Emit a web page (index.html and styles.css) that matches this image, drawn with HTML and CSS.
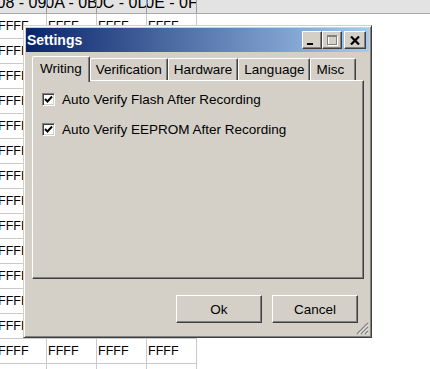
FILE: index.html
```html
<!DOCTYPE html>
<html lang="en">
<head>
  <meta charset="UTF-8" />
  <title>Settings</title>
  <link rel="stylesheet" href="styles.css">
</head>
<body>

  <div class="sheet">
    <div class="sheet-head">
      <div class="hcell"><span>08 - 09</span></div>
      <div class="hcell"><span>0A - 0B</span></div>
      <div class="hcell"><span>0C - 0D</span></div>
      <div class="hcell"><span>0E - 0F</span></div>
    </div>
    <div class="sheet-row"><div class="cell">FFFF</div><div class="cell">FFFF</div><div class="cell">FFFF</div><div class="cell">FFFF</div></div>
    <div class="sheet-row"><div class="cell">FFFF</div><div class="cell">FFFF</div><div class="cell">FFFF</div><div class="cell">FFFF</div></div>
    <div class="sheet-row"><div class="cell">FFFF</div><div class="cell">FFFF</div><div class="cell">FFFF</div><div class="cell">FFFF</div></div>
    <div class="sheet-row"><div class="cell">FFFF</div><div class="cell">FFFF</div><div class="cell">FFFF</div><div class="cell">FFFF</div></div>
    <div class="sheet-row"><div class="cell">FFFF</div><div class="cell">FFFF</div><div class="cell">FFFF</div><div class="cell">FFFF</div></div>
    <div class="sheet-row"><div class="cell">FFFF</div><div class="cell">FFFF</div><div class="cell">FFFF</div><div class="cell">FFFF</div></div>
    <div class="sheet-row"><div class="cell">FFFF</div><div class="cell">FFFF</div><div class="cell">FFFF</div><div class="cell">FFFF</div></div>
    <div class="sheet-row"><div class="cell">FFFF</div><div class="cell">FFFF</div><div class="cell">FFFF</div><div class="cell">FFFF</div></div>
    <div class="sheet-row"><div class="cell">FFFF</div><div class="cell">FFFF</div><div class="cell">FFFF</div><div class="cell">FFFF</div></div>
    <div class="sheet-row"><div class="cell">FFFF</div><div class="cell">FFFF</div><div class="cell">FFFF</div><div class="cell">FFFF</div></div>
    <div class="sheet-row"><div class="cell">FFFF</div><div class="cell">FFFF</div><div class="cell">FFFF</div><div class="cell">FFFF</div></div>
    <div class="sheet-row"><div class="cell">FFFF</div><div class="cell">FFFF</div><div class="cell">FFFF</div><div class="cell">FFFF</div></div>
    <div class="sheet-row"><div class="cell">FFFF</div><div class="cell">FFFF</div><div class="cell">FFFF</div><div class="cell">FFFF</div></div>
    <div class="sheet-row"><div class="cell">FFFF</div><div class="cell">FFFF</div><div class="cell">FFFF</div><div class="cell">FFFF</div></div>
    <div class="sheet-row"><div class="cell"></div><div class="cell"></div><div class="cell"></div><div class="cell"></div></div>
  </div>

  <div class="window">
    <div class="titlebar">
      <span class="title">Settings</span>
      <div class="title-buttons">
        <div class="tb tb-min"><span class="min-bar"></span></div>
        <div class="tb tb-max">
          <svg width="11" height="11" viewBox="0 0 11 11">
            <rect x="1.5" y="1.5" width="9" height="9" fill="none" stroke="#fff"/>
            <rect x="0.5" y="0.5" width="9" height="9" fill="none" stroke="#808080"/>
            <rect x="0" y="1" width="10" height="1" fill="#808080"/>
          </svg>
        </div>
        <div class="tb tb-close">
          <svg width="10" height="9" viewBox="0 0 10 9">
            <path d="M1 0.5 L9 8.5 M9 0.5 L1 8.5" stroke="#000" stroke-width="2.2" fill="none"/>
          </svg>
        </div>
      </div>
    </div>

    <div class="window-body">
      <div class="tabs">
        <div class="tab active">Writing</div>
        <div class="tab">Verification</div>
        <div class="tab">Hardware</div>
        <div class="tab">Language</div>
        <div class="tab tab-misc">Misc</div>
      </div>

      <div class="panel">
        <label class="check-row">
          <span class="checkbox">
            <svg width="9" height="9" viewBox="0 0 9 9"><path d="M1 4 L3.5 6.5 L8 1.5" stroke="#000" stroke-width="2" fill="none"/></svg>
          </span>
          Auto Verify Flash After Recording
        </label>
        <label class="check-row">
          <span class="checkbox">
            <svg width="9" height="9" viewBox="0 0 9 9"><path d="M1 4 L3.5 6.5 L8 1.5" stroke="#000" stroke-width="2" fill="none"/></svg>
          </span>
          Auto Verify EEPROM After Recording
        </label>
      </div>

      <div class="actions">
        <button class="btn">Ok</button>
        <button class="btn">Cancel</button>
      </div>
    </div>

    <svg class="grip" width="13" height="13" viewBox="0 0 13 13">
      <path d="M12 1 L1 12 M12 5 L5 12 M12 9 L9 12" stroke="#808080" stroke-width="1.4" fill="none"/>
      <path d="M12 2.5 L2.5 12 M12 6.5 L6.5 12 M12 10.5 L10.5 12" stroke="#fff" stroke-width="0.8" fill="none"/>
    </svg>
  </div>

</body>
</html>
```

FILE: styles.css
```css
body {
  margin: 0;
  height: 369px;
  overflow: hidden;
  position: relative;
  background: #fff;
  color: #000;
  font-family: 'Liberation Sans', Arial, sans-serif;
}

/* grid behind the dialog */
.sheet {
  height: 369px;
  overflow: hidden;
  margin-left: -3px;
}

.sheet-head {
  display: flex;
  height: 13px;
  background: #e3e3e3;
  border-bottom: 1px solid #a9a9a9;
}

.hcell {
  display: flex;
  justify-content: center;
  width: 50px;
  flex-shrink: 0;
  box-sizing: border-box;
  border-right: 1px solid #9c9c9c;
  overflow: hidden;
  font-size: 16px;
  line-height: 16px;
}

.hcell span {
  flex-shrink: 0;
  white-space: nowrap;
  margin-top: -5px;
}

.sheet-row {
  display: flex;
}

.cell {
  width: 50px;
  height: 25px;
  box-sizing: border-box;
  padding-left: 1px;
  border-right: 1px solid #c9c9c9;
  border-bottom: 1px solid #c9c9c9;
  font-size: 12.5px;
  line-height: 24px;
  white-space: nowrap;
  overflow: hidden;
}

/* dialog */
.window {
  position: absolute;
  left: 23px;
  top: 25px;
  width: 349px;
  height: 313px;
  box-sizing: border-box;
  padding: 2px;
  background: #d4d0c8;
  border: 1px solid;
  border-color: #d4d0c8 #404040 #404040 #d4d0c8;
  box-shadow: inset 1px 1px #fff, inset -1px -1px #808080;
  display: flex;
  flex-direction: column;
  font-size: 13.5px;
}

.titlebar {
  display: flex;
  align-items: center;
  height: 24px;
  padding: 0 3px 0 1px;
  background: linear-gradient(to right, #0a246a, #a6caf0);
}

.title {
  color: #fff;
  font-weight: bold;
  font-size: 14px;
}

.title-buttons {
  display: flex;
  margin-left: auto;
}

.tb {
  width: 20px;
  height: 18px;
  box-sizing: border-box;
  display: flex;
  align-items: center;
  justify-content: center;
  background: #d4d0c8;
  border: 1px solid;
  border-color: #fff #404040 #404040 #fff;
  box-shadow: inset -1px -1px #808080;
}

.tb-close {
  width: 22px;
  margin-left: 2px;
}

.tb-min {
  align-items: flex-end;
  justify-content: flex-start;
  padding: 0 0 3px 4px;
}

.min-bar {
  width: 6px;
  height: 2px;
  background: #000;
}

.window-body {
  display: flex;
  flex-direction: column;
  padding: 4px 5px 0 6px;
}

.tabs {
  display: flex;
  align-items: flex-end;
  height: 24px;
  padding-left: 2px;
}

.tab {
  position: relative;
  height: 22px;
  box-sizing: border-box;
  padding: 0 5px;
  line-height: 22px;
  border: 1px solid;
  border-bottom: none;
  border-color: #fff #404040 transparent #fff;
  box-shadow: inset -1px 0 #808080;
  border-radius: 2px 2px 0 0;
  white-space: nowrap;
}

.tab.active {
  z-index: 1;
  height: 26px;
  margin-left: -2px;
  margin-bottom: -2px;
  padding: 0 7px;
  line-height: 23px;
  background: #d4d0c8;
}

.tab-misc {
  min-width: 46px;
}

.panel {
  height: 199px;
  box-sizing: border-box;
  padding: 11px 9px;
  border: 1px solid;
  border-color: #fff #404040 #404040 #fff;
  box-shadow: inset -1px -1px #808080;
}

.check-row {
  display: flex;
  align-items: center;
  gap: 7px;
  height: 14px;
  margin-bottom: 16px;
}

.checkbox {
  width: 13px;
  height: 13px;
  box-sizing: border-box;
  display: flex;
  align-items: center;
  justify-content: center;
  background: #fff;
  border: 1px solid;
  border-color: #808080 #fff #fff #808080;
  box-shadow: inset 1px 1px #404040, inset -1px -1px #d4d0c8;
}

.actions {
  display: flex;
  justify-content: flex-end;
  gap: 10px;
  margin-top: 16px;
  padding-right: 6px;
}

.btn {
  width: 86px;
  height: 28px;
  box-sizing: border-box;
  background: #d4d0c8;
  border: 1px solid;
  border-color: #fff #404040 #404040 #fff;
  box-shadow: inset -1px -1px #808080;
  font-family: inherit;
  font-size: 13.5px;
  color: #000;
}

.grip {
  position: absolute;
  right: 2px;
  bottom: 2px;
}
```
